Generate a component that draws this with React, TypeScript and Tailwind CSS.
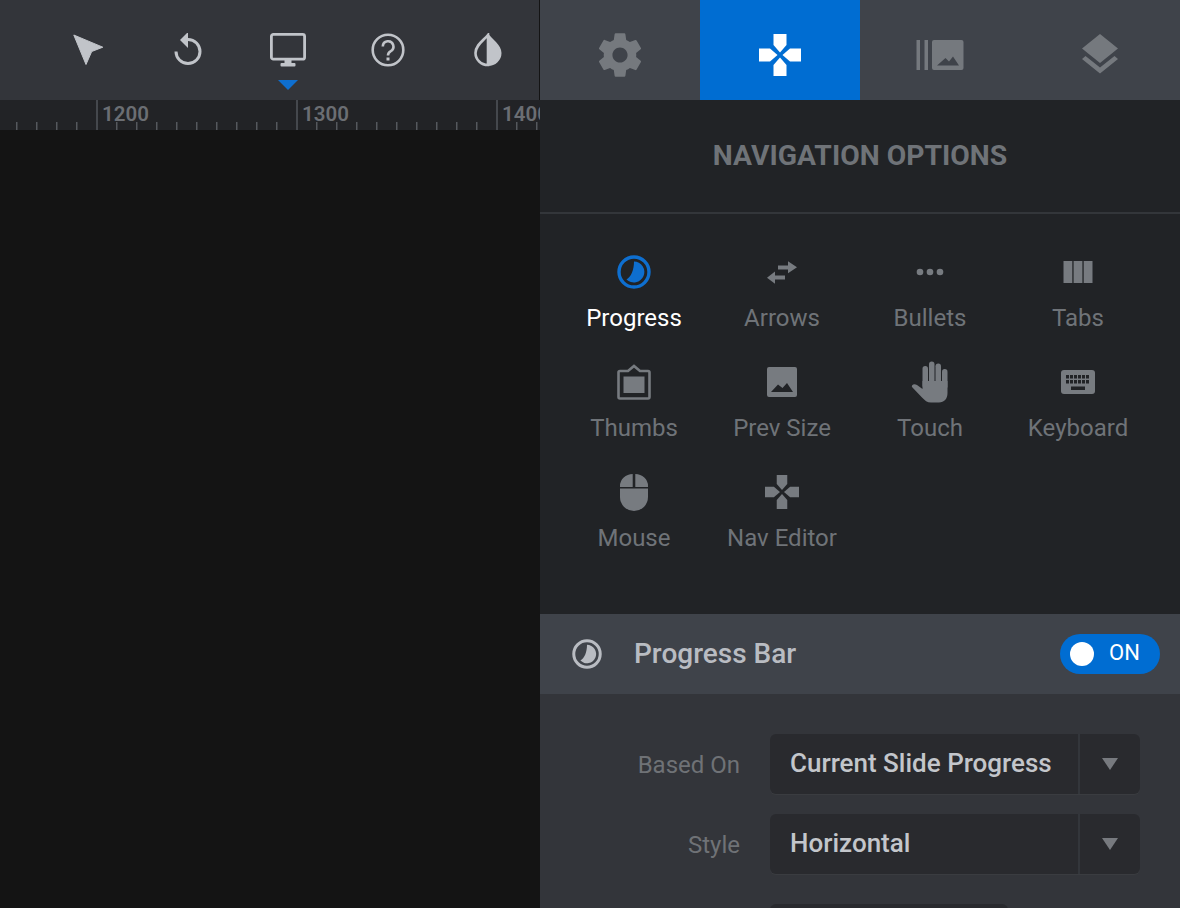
const font = { fontFamily: "Roboto, sans-serif" };

function Arrow() {
  return (
    <svg width="32" height="36" viewBox="0 0 32 36" fill="currentColor">
      <path d="M1.800 2 L30.800 14.200 L19.700 18.500 L14 31.500 Z" strokeLinejoin="round" stroke="currentColor" />
    </svg>
  );
}

function Undo() {
  return (
    <svg width="32" height="36" viewBox="0 0 32 36" fill="none">
      <path d="M16 6.500 A12 12 0 1 1 4 18.500" stroke="currentColor" strokeWidth="3" />
      <path d="M16 -1 V15 L8 7 Z" fill="currentColor" />
    </svg>
  );
}

function Monitor() {
  return (
    <svg width="38" height="36" viewBox="0 0 38 36" fill="none">
      <rect x="2.400" y="1.400" width="33.200" height="24.800" rx="2" stroke="currentColor" strokeWidth="2.800" />
      <rect x="15.500" y="27" width="7" height="4" fill="currentColor" />
      <rect x="11.500" y="30" width="15" height="3.500" rx="1" fill="currentColor" />
    </svg>
  );
}

function Help() {
  return (
    <svg width="34" height="36" viewBox="0 0 34 36" fill="none">
      <circle cx="17" cy="17" r="15.300" stroke="currentColor" strokeWidth="2.600" />
      <path d="M11.800 13.500 A5.300 5.300 0 1 1 19.500 18.300 C17.500 19.500 17 20.500 17 22.500" stroke="currentColor" strokeWidth="2.600" />
      <rect x="15.500" y="24.500" width="3" height="3" fill="currentColor" />
    </svg>
  );
}

function Drop() {
  return (
    <svg width="28" height="36" viewBox="0 0 28 36" fill="none">
      <path d="M14 2 C10 7 1.500 12 1.500 20 A12.500 12 0 0 0 14 32 Z" stroke="currentColor" strokeWidth="2.600" />
      <path d="M14 0.500 C18 6 27.500 12 27.500 20 A13.500 13 0 0 1 14 33 Z" fill="currentColor" />
    </svg>
  );
}

function Gear() {
  return (
    <svg width="52" height="52" viewBox="0 0 24 24" fill="currentColor">
      <path d="M19.430 12.980c.04-.32.07-.64.07-.98s-.03-.66-.07-.98l2.110-1.650c.19-.15.24-.42.12-.64l-2-3.460c-.12-.22-.39-.3-.61-.22l-2.490 1c-.52-.4-1.080-.73-1.690-.98l-.38-2.650C14.460 2.180 14.250 2 14 2h-4c-.25 0-.46.18-.49.42l-.38 2.650c-.61.25-1.170.59-1.690.98l-2.490-1c-.23-.09-.49 0-.61.22l-2 3.460c-.13.22-.07.49.12.64l2.110 1.650c-.04.32-.07.65-.07.98s.03.66.07.98l-2.110 1.650c-.19.15-.24.42-.12.64l2 3.460c.12.22.39.3.61.22l2.490-1c.52.4 1.080.73 1.690.98l.38 2.650c.03.24.24.42.49.42h4c.25 0 .46-.18.49-.42l.38-2.650c.61-.25 1.170-.59 1.690-.98l2.490 1c.23.09.49 0 .61-.22l2-3.460c.12-.22.07-.49-.12-.64l-2.110-1.650zM12 15.500c-1.930 0-3.500-1.570-3.500-3.500s1.570-3.500 3.500-3.500 3.500 1.570 3.500 3.500-1.570 3.500-3.500 3.500z" />
    </svg>
  );
}

function Dpad({ size }: { size: number }) {
  return (
    <svg width={size} height={size} viewBox="0 0 42 42" fill="currentColor">
      <path d="M14.500 0 H27.500 V11 L21 18.500 L14.500 11 Z" />
      <path d="M14.500 42 H27.500 V31 L21 23.500 L14.500 31 Z" />
      <path d="M0 14.500 V27.500 H11 L18.500 21 L11 14.500 Z" />
      <path d="M42 14.500 V27.500 H31 L23.500 21 L31 14.500 Z" />
    </svg>
  );
}

function Library() {
  return (
    <svg width="48" height="30" viewBox="0 0 48 30" fill="currentColor">
      <rect x="0.500" y="0" width="3.500" height="30" />
      <rect x="8.500" y="0" width="3.500" height="30" />
      <path fillRule="evenodd" d="M18 0 H45.500 A2 2 0 0 1 47.500 2 V28 A2 2 0 0 1 45.500 30 H18 A2 2 0 0 1 16 28 V2 A2 2 0 0 1 18 0 Z M21 25.500 H43 L37 16.500 L33 21.500 L29.500 18 Z" />
    </svg>
  );
}

function Layers() {
  return (
    <svg width="38" height="40" viewBox="0 0 38 40" fill="currentColor">
      <path d="M19 0 L37 14.500 L19 29 L1 14.500 Z" />
      <path d="M1 25 L4.500 22 L19 33.500 L33.500 22 L37 25 L19 39.500 Z" />
    </svg>
  );
}

function ProgressIcon({ size }: { size: number }) {
  return (
    <svg width={size} height={size} viewBox="0 0 34 34" fill="none">
      <circle cx="17" cy="17" r="15" stroke="currentColor" strokeWidth="3.400" />
      <path d="M17 6.500 A10.500 10.500 0 1 1 9.500 24.500 C14 22 17 15 17 6.500 Z" fill="currentColor" />
    </svg>
  );
}

function Swap() {
  return (
    <svg width="30" height="23" viewBox="0 0 30 23" fill="currentColor">
      <path d="M11 4.500 H21 V0.200 L30 6.200 L21 12.200 V8.500 H11 Z" />
      <path d="M18 14.500 H8 V10.500 L0 16.800 L8 22.800 V18.500 H18 Z" />
    </svg>
  );
}

function Dots() {
  return (
    <svg width="28" height="8" viewBox="0 0 28 8" fill="currentColor">
      <circle cx="4" cy="4" r="3.300" />
      <circle cx="14" cy="4" r="3.300" />
      <circle cx="24" cy="4" r="3.300" />
    </svg>
  );
}

function Columns() {
  return (
    <svg width="30" height="22" viewBox="0 0 30 22" fill="currentColor">
      <rect x="0.500" y="0" width="8.800" height="22" />
      <rect x="10.600" y="0" width="8.800" height="22" />
      <rect x="20.700" y="0" width="8.800" height="22" />
    </svg>
  );
}

function Thumb() {
  return (
    <svg width="34" height="36" viewBox="0 0 34 36" fill="none">
      <path d="M3 7 H11 L17 2 L23 7 H31 A1.500 1.500 0 0 1 32.500 8.500 V33 A1.500 1.500 0 0 1 31 34.500 H3 A1.500 1.500 0 0 1 1.500 33 V8.500 A1.500 1.500 0 0 1 3 7 Z" stroke="currentColor" strokeWidth="2.600" />
      <rect x="6.500" y="12.500" width="21" height="16.500" fill="currentColor" />
    </svg>
  );
}

function ImageIcon() {
  return (
    <svg width="30" height="30" viewBox="0 0 30 30" fill="currentColor">
      <path fillRule="evenodd" d="M2 0 H28 A2 2 0 0 1 30 2 V28 A2 2 0 0 1 28 30 H2 A2 2 0 0 1 0 28 V2 A2 2 0 0 1 2 0 Z M4 25 H26 L20 16 L15.500 21 L11 17.500 Z" />
    </svg>
  );
}

function Hand() {
  return (
    <svg width="38" height="42" viewBox="0 0 38 42" fill="currentColor">
      <rect x="11.500" y="5" width="5.500" height="22" rx="2.700" />
      <rect x="18" y="0.500" width="5.500" height="26" rx="2.700" />
      <rect x="24.500" y="2.500" width="5.500" height="24" rx="2.700" />
      <rect x="31" y="8" width="5.500" height="20" rx="2.700" />
      <path d="M11.500 20 H36.500 V32 C36.500 38 33 41.500 28 41.500 H20 C16 41.500 14 39.500 11 36.500 L1 26 C0 24 3 22 6 24 L11.500 28 Z" />
    </svg>
  );
}

function Keyboard() {
  const keys: number[][] = [];
  for (let row = 0; row < 2; row++) {
    for (let col = 0; col < 6; col++) keys.push([5 + col * 4, 5 + row * 5]);
  }
  return (
    <svg width="34" height="24" viewBox="0 0 34 24">
      <rect width="34" height="24" rx="3" fill="currentColor" />
      {keys.map(([x, y], i) => (
        <rect key={i} x={x} y={y} width="3" height="3.500" fill="#212326" />
      ))}
      <rect x="10" y="16.500" width="14" height="3.500" fill="#212326" />
    </svg>
  );
}

function Mouse() {
  return (
    <svg width="28" height="37" viewBox="0 0 28 37" fill="currentColor">
      <path d="M12.700 0 V13 H0 V12 A13 12 0 0 1 12.700 0 Z" />
      <path d="M15.300 0 V13 H28 V12 A13 12 0 0 0 15.300 0 Z" />
      <path d="M0 14.500 H28 V23 A14 14 0 0 1 0 23 Z" />
    </svg>
  );
}

const navItems = [
  { label: "Progress", icon: <ProgressIcon size={34} />, active: true },
  { label: "Arrows", icon: <Swap /> },
  { label: "Bullets", icon: <Dots /> },
  { label: "Tabs", icon: <Columns /> },
  { label: "Thumbs", icon: <Thumb /> },
  { label: "Prev Size", icon: <ImageIcon /> },
  { label: "Touch", icon: <Hand /> },
  { label: "Keyboard", icon: <Keyboard /> },
  { label: "Mouse", icon: <Mouse /> },
  { label: "Nav Editor", icon: <Dpad size={34} /> },
];

function Ruler() {
  const ticks: number[] = [];
  for (let x = 16; x < 540; x += 20) {
    if (x !== 96 && x !== 296 && x !== 496) ticks.push(x);
  }
  return (
    <div className="relative flex h-[30px] w-[540px] shrink-0 overflow-hidden bg-[#222326] pl-[96px]">
      {["1200", "1300", "1400"].map((n) => (
        <div key={n} className="h-full w-[200px] shrink-0 border-l-2 border-[#45484d] pl-[4px] text-[20.5px] leading-[29px] font-semibold text-[#6b6e73]">
          {n}
        </div>
      ))}
      <svg className="absolute top-0 left-0" width="540" height="30">
        {ticks.map((x) => (
          <rect key={x} x={x} y="22" width="1.500" height="8" fill="#55585d" />
        ))}
      </svg>
    </div>
  );
}

function Select({ label, value }: { label: string; value: string }) {
  return (
    <div className="flex h-[60px] items-center">
      <div className="w-[200px] pt-[2px] text-right text-[24px] text-[#6f7276]">{label}</div>
      <div className="ml-[30px] flex h-full w-[370px] items-center overflow-hidden rounded-[6px] bg-[#292a2e] shadow-[0_1px_0_#3a3c40]">
        <div className="flex h-full flex-1 items-center pb-[2px] pl-[20px] text-[26px] font-medium text-[#c3c6cb]">{value}</div>
        <div className="h-full w-[2px] bg-[#33363b]" />
        <div className="flex h-full w-[60px] items-center justify-center">
          <svg width="16" height="12" viewBox="0 0 16 12" fill="#777a7f">
            <path d="M0 0 H16 L8 12 Z" />
          </svg>
        </div>
      </div>
    </div>
  );
}

export default function App() {
  return (
    <div className="flex h-[908px] w-[1180px] overflow-hidden bg-[#141414]" style={font}>
      <div className="flex w-[540px] shrink-0 flex-col">
        <div className="flex h-[100px] shrink-0 items-center border-r border-[#141414] bg-[#33353a] pt-[2px] pl-[72px] text-[#c1c4c9]">
          <div className="flex w-[32px] justify-center"><Arrow /></div>
          <div className="ml-[68px] flex w-[32px] justify-center"><Undo /></div>
          <div className="relative ml-[65px] flex w-[38px] justify-center">
            <Monitor />
            <div className="absolute top-[47px] left-[9px] h-0 w-0 border-x-[10px] border-t-[10px] border-x-transparent border-t-[#0e6fd0]" />
          </div>
          <div className="ml-[64px] flex w-[34px] justify-center"><Help /></div>
          <div className="ml-[69px] flex w-[28px] justify-center"><Drop /></div>
        </div>
        <Ruler />
      </div>

      <div className="flex w-[640px] shrink-0 flex-col bg-[#212326]">
        <div className="flex h-[100px] shrink-0 bg-[#3f434a] text-[#75797e]">
          <div className="flex w-[160px] items-center justify-center pt-[9px]"><Gear /></div>
          <div className="flex w-[160px] items-center justify-center bg-[#006dd2] pt-[9px] text-white"><Dpad size={42} /></div>
          <div className="flex w-[160px] items-center justify-center pt-[10px]"><Library /></div>
          <div className="flex w-[160px] items-center justify-center pt-[7px]"><Layers /></div>
        </div>

        <div className="flex h-[114px] shrink-0 items-center justify-center border-b-2 border-[#33363a] text-[28.3px] font-bold text-[#6f7378]">
          NAVIGATION OPTIONS
        </div>

        <div className="grid h-[400px] shrink-0 grid-cols-[148px_148px_148px_148px] grid-rows-[110px_110px_110px] content-start px-[20px] pt-[33px]">
          {navItems.map((item) => (
            <div key={item.label} className={`flex flex-col items-center ${item.active ? "text-white" : "text-[#6f7378]"}`}>
              <div className={`flex h-[50px] items-center justify-center ${item.active ? "text-[#0e6fd0]" : "text-[#777b80]"}`}>
                {item.icon}
              </div>
              <div className="mt-[5px] text-[24px] leading-[32px]">{item.label}</div>
            </div>
          ))}
        </div>

        <div className="flex h-[80px] shrink-0 items-center bg-[#3f434a] pr-[20px] pl-[32px] text-[#b9bcc2]">
          <ProgressIcon size={30} />
          <div className="ml-[32px] flex-1 text-[28px] font-medium">Progress Bar</div>
          <div className="flex h-[40px] w-[100px] items-center rounded-full bg-[#006dd2] pl-[10px] text-white">
            <div className="h-[24px] w-[24px] rounded-full bg-white" />
            <div className="ml-[15px] pb-[3px] text-[22px]">ON</div>
          </div>
        </div>

        <div className="flex flex-1 flex-col bg-[#33353a] pt-[40px]">
          <Select label="Based On" value="Current Slide Progress" />
          <div className="mt-[20px]"><Select label="Style" value="Horizontal" /></div>
          <div className="mt-[30px] ml-[230px] h-[60px] w-[238px] shrink-0 rounded-[6px] bg-[#292a2e]" />
        </div>
      </div>
    </div>
  );
}
